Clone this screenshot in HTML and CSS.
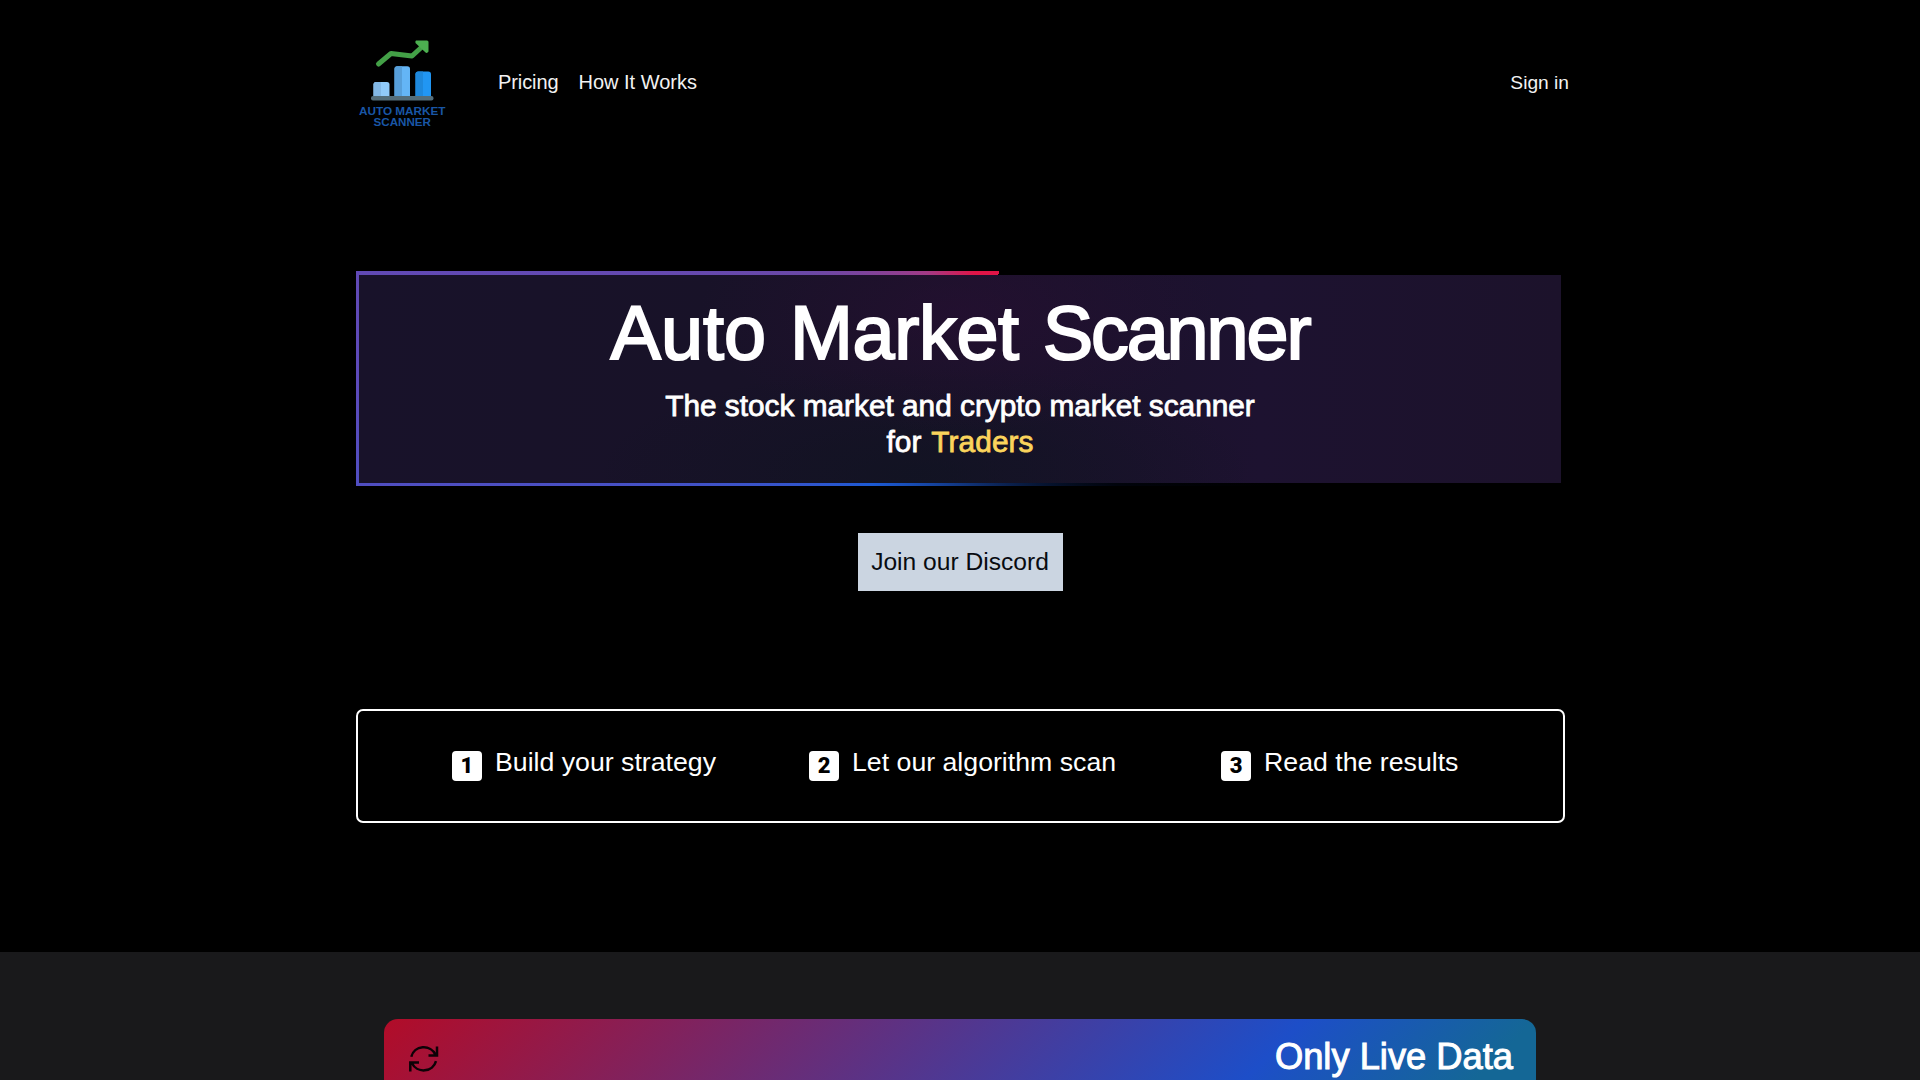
FILE: index.html
```html
<!DOCTYPE html>
<html lang="en">
<head>
<meta charset="utf-8">
<title>Auto Market Scanner</title>
<link rel="stylesheet" href="styles.css">
</head>
<body>
<header class="nav">
  <a class="logo">
    <svg width="90" height="92" viewBox="358 37 90 92">
      <path d="M378.500 64 L391 53.500 L412 56 L424 45" fill="none" stroke="#43a047" stroke-width="5" stroke-linecap="round" stroke-linejoin="round"/>
      <path d="M416 40.500 H427 Q428.500 40.500 428.500 42 V51.500 Q427 54 425 52 L415.500 43 Q415 41 416 40.500Z" fill="#4caf50"/>
      <path d="M373.500 96 V84.500 q0-2.500 2.500-2.500 H387 q2.500 0 2.500 2.500 V96Z" fill="#90caf9"/>
      <path d="M373.500 96 V84.500 q0-2.500 2.500-2.500 H381 V96Z" fill="#82b8e6"/>
      <path d="M394.500 96 V69 q0-2.800 2.800-2.800 H407.200 q2.800 0 2.800 2.800 V96Z" fill="#64b5f6"/>
      <path d="M394.500 96 V69 q0-2.800 2.800-2.800 H402 V96Z" fill="#579fda"/>
      <path d="M415.500 96 V74.300 q0-2.800 2.800-2.800 H428.200 q2.800 0 2.800 2.800 V96Z" fill="#2196f3"/>
      <path d="M415.500 96 V74.300 q0-2.800 2.800-2.800 H423 V96Z" fill="#1e88dc"/>
      <rect x="371" y="96" width="62.500" height="4.500" rx="2" fill="#536d7a"/>
      <text class="logo-text" x="359" y="114.700" textLength="86.500" lengthAdjust="spacingAndGlyphs">AUTO MARKET</text>
      <text class="logo-text" x="373.500" y="125.500" textLength="57.500" lengthAdjust="spacingAndGlyphs">SCANNER</text>
    </svg>
  </a>
  <nav class="links">
    <a class="link-pricing">Pricing</a>
    <a>How It Works</a>
  </nav>
  <a class="signin">Sign in</a>
</header>

<main class="hero">
  <section class="banner">
    <div class="banner-inner">
      <h1>Auto <span class="snug">Market</span> <span class="tight">Scanner</span></h1>
      <h2>The stock market and crypto market scanner<br><span class="wide">for <span class="accent">Traders</span></span></h2>
    </div>
  </section>
  <a class="discord">Join our Discord</a>
  <section class="steps">
    <div class="step"><span class="num">1</span><span>Build your strategy</span></div>
    <div class="step"><span class="num">2</span><span>Let our algorithm scan</span></div>
    <div class="step"><span class="num">3</span><span>Read the results</span></div>
  </section>
</main>

<section class="features">
  <article class="card">
    <svg class="refresh" width="30" height="28" viewBox="0 0 30 28" fill="none" stroke="#0c0206" stroke-width="2.500">
      <path d="M2.300 11.800 A12.800 12.300 0 0 1 26.500 9.700 M28 1.500 V10.400 H19.500 M27 16.200 A12.800 12.300 0 0 1 3 18.300 M1.300 26.500 V17.400 H10"/>
    </svg>
    <h3>Only Live Data</h3>
  </article>
</section>
</body>
</html>
```
FILE: styles.css
```css
* { box-sizing: border-box; }
body {
  margin: 0;
  height: 1080px;
  overflow: hidden;
  background: #000;
  color: #fff;
  font-family: "Liberation Sans", Arial, sans-serif;
}
h1, h2, h3 { margin: 0; font-weight: 400; }

.nav {
  display: flex;
  align-items: center;
  width: 1211px;
  height: 166px;
  margin-left: 358px;
}
.logo { display: flex; }
.logo-text { font-size: 11.5px; font-weight: 700; fill: #1956a6; }
.links {
  display: flex;
  gap: 20px;
  margin: -2px 0 0 50px;
  font-size: 20px;
  color: #f2f2f2;
}
.link-pricing { letter-spacing: -0.1px; }
.signin {
  margin-left: auto;
  font-size: 19.2px;
  color: #f2f2f2;
}

.hero {
  display: flex;
  flex-direction: column;
  align-items: center;
  height: 786px;
  padding-top: 105px;
}
.banner {
  width: 1209px;
  height: 215px;
  padding: 3.5px;
  background: conic-gradient(from 20deg, #000 0deg, #000 88deg, #01040c 104deg, #1c5ad4 200deg, #4a50c4 235deg, #5d4abb 250deg, #6b48a6 285deg, #a23a86 322deg, #e01447 348deg, #e01447 360deg);
}
.banner-inner {
  display: flex;
  flex-direction: column;
  align-items: center;
  height: 100%;
  padding-top: 20px;
  background:
    radial-gradient(ellipse 260px 120px at 50% 18%, rgba(44, 14, 54, .5), transparent),
    radial-gradient(ellipse 330px 110px at 47% 96%, rgba(14, 20, 32, .6), transparent),
    linear-gradient(90deg, #18122a, #181227 45%, #1d1230 75%, #1c122b);
}
h1 {
  font-size: 75.6px;
  line-height: 76px;
  word-spacing: 3px;
  white-space: nowrap;
  -webkit-text-stroke: 2px #fff;
}
.snug { letter-spacing: -0.4px; }
.tight { letter-spacing: -2.1px; }
h2 {
  margin-top: 17px;
  font-size: 29.8px;
  line-height: 36px;
  text-align: center;
  -webkit-text-stroke: 0.8px currentColor;
}
.wide { word-spacing: 2px; letter-spacing: 0.1px; }
.accent { color: #fbd45c; }
.discord {
  width: 205px;
  height: 58px;
  margin-top: 47px;
  background: #cbd5e1;
  color: #080b10;
  font-size: 24.6px;
  line-height: 58px;
  text-align: center;
}
.steps {
  display: flex;
  width: 1209px;
  height: 114px;
  margin-top: 118px;
  padding: 35px 0 0 94.5px;
  border: 2px solid #fff;
  border-radius: 7px;
}
.step {
  display: flex;
  align-items: flex-start;
  font-size: 26.7px;
  line-height: 32px;
  white-space: nowrap;
}
.step:nth-child(2) { margin-left: 93px; }
.step:nth-child(3) { margin-left: 105px; }
.num {
  width: 30px;
  height: 30px;
  margin: 5px 13px 0 0;
  border-radius: 4px;
  background: #fff;
  color: #000;
  font-family: Roboto, sans-serif;
  font-size: 22px;
  font-weight: 900;
  line-height: 30px;
  text-align: center;
}

.features {
  height: 128px;
  padding: 67px 0 0 384px;
  background: #19191b;
}
.card {
  display: flex;
  justify-content: space-between;
  align-items: flex-start;
  width: 1152px;
  height: 61px;
  padding: 18px 23px 0 25px;
  border-radius: 14px 14px 0 0;
  background: linear-gradient(135deg, #b20c28 0, #1d4ec8 651px, #146796 815px);
  background-size: 1152px 400px;
}
.refresh { margin-top: 8px; }
h3 {
  font-size: 36.3px;
  line-height: 40px;
  -webkit-text-stroke: 1px #fff;
}
```
